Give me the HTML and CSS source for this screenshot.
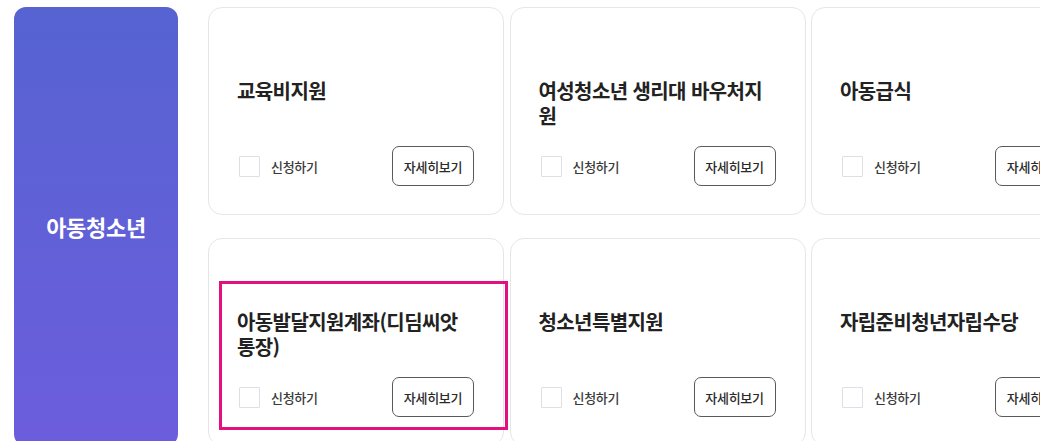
FILE: index.html
```html
<!DOCTYPE html>
<html lang="ko">
<head>
<meta charset="utf-8">
<link rel="stylesheet" href="styles.css">
</head>
<body>
<div class="wrap">
  <div class="category">아동청소년</div>
  <div class="grid">
    <div class="card">
      <h3 class="title">교육비지원</h3>
      <div class="actions">
        <label class="apply"><span class="box"></span>신청하기</label>
        <button class="more">자세히보기</button>
      </div>
    </div>
    <div class="card">
      <h3 class="title">여성청소년 생리대 바우처지원</h3>
      <div class="actions">
        <label class="apply"><span class="box"></span>신청하기</label>
        <button class="more">자세히보기</button>
      </div>
    </div>
    <div class="card">
      <h3 class="title">아동급식</h3>
      <div class="actions">
        <label class="apply"><span class="box"></span>신청하기</label>
        <button class="more">자세히보기</button>
      </div>
    </div>
    <div class="card highlighted">
      <h3 class="title">아동발달지원계좌(디딤씨앗 통장)</h3>
      <div class="actions">
        <label class="apply"><span class="box"></span>신청하기</label>
        <button class="more">자세히보기</button>
      </div>
      <div class="mark"></div>
    </div>
    <div class="card">
      <h3 class="title">청소년특별지원</h3>
      <div class="actions">
        <label class="apply"><span class="box"></span>신청하기</label>
        <button class="more">자세히보기</button>
      </div>
    </div>
    <div class="card">
      <h3 class="title">자립준비청년자립수당</h3>
      <div class="actions">
        <label class="apply"><span class="box"></span>신청하기</label>
        <button class="more">자세히보기</button>
      </div>
    </div>
  </div>
</div>
</body>
</html>
```
FILE: styles.css
```css
html, body {
  margin: 0;
  padding: 0;
  background: #ffffff;
  overflow: hidden;
}
body {
  font-family: "Noto Sans CJK KR", "Noto Sans", sans-serif;
  color: #222;
}
.wrap {
  display: flex;
  gap: 30px;
  padding: 7px 0 0 14px;
  width: 1200px;
}
.category {
  flex: 0 0 164px;
  border-radius: 12px;
  background: linear-gradient(180deg, #5663d1 0%, #6c5ddd 100%);
  color: #fff;
  font-size: 22px;
  font-weight: 700;
  display: flex;
  align-items: center;
  justify-content: center;
  letter-spacing: -0.3px;
  padding-bottom: 2px;
}
.grid {
  display: grid;
  grid-template-columns: repeat(3, 296px);
  grid-auto-rows: 208px;
  column-gap: 5.5px;
  row-gap: 23px;
}
.card {
  position: relative;
  box-sizing: border-box;
  border: 1px solid #e6e6e9;
  border-radius: 14px;
  background: #fff;
  padding: 70px 29px 0 28px;
  display: flex;
  flex-direction: column;
}
.title {
  margin: 0;
  font-size: 20px;
  font-weight: 700;
  line-height: 25px;
  color: #222;
  letter-spacing: -0.6px;
  height: 68px;
}
.actions {
  display: flex;
  align-items: center;
  justify-content: space-between;
}
.apply {
  display: flex;
  align-items: center;
  gap: 11px;
  font-size: 13px;
  font-weight: 500;
  color: #3a3a3a;
  letter-spacing: -0.3px;
  padding-left: 2px;
}
.box {
  width: 19px;
  height: 19px;
  border: 1px solid #dedee6;
  background: #fff;
  border-radius: 1px;
}
.more {
  width: 82px;
  height: 40px;
  box-sizing: border-box;
  border: 1.5px solid #5a5a5a;
  border-radius: 7px;
  background: #fff;
  font-family: inherit;
  font-size: 13px;
  font-weight: 500;
  color: #2a2a2a;
  letter-spacing: -0.3px;
  padding: 0;
}
.mark {
  position: absolute;
  left: 10px;
  top: 42px;
  width: 289px;
  height: 149px;
  box-sizing: border-box;
  border: 3px solid #e3107f;
}
```
